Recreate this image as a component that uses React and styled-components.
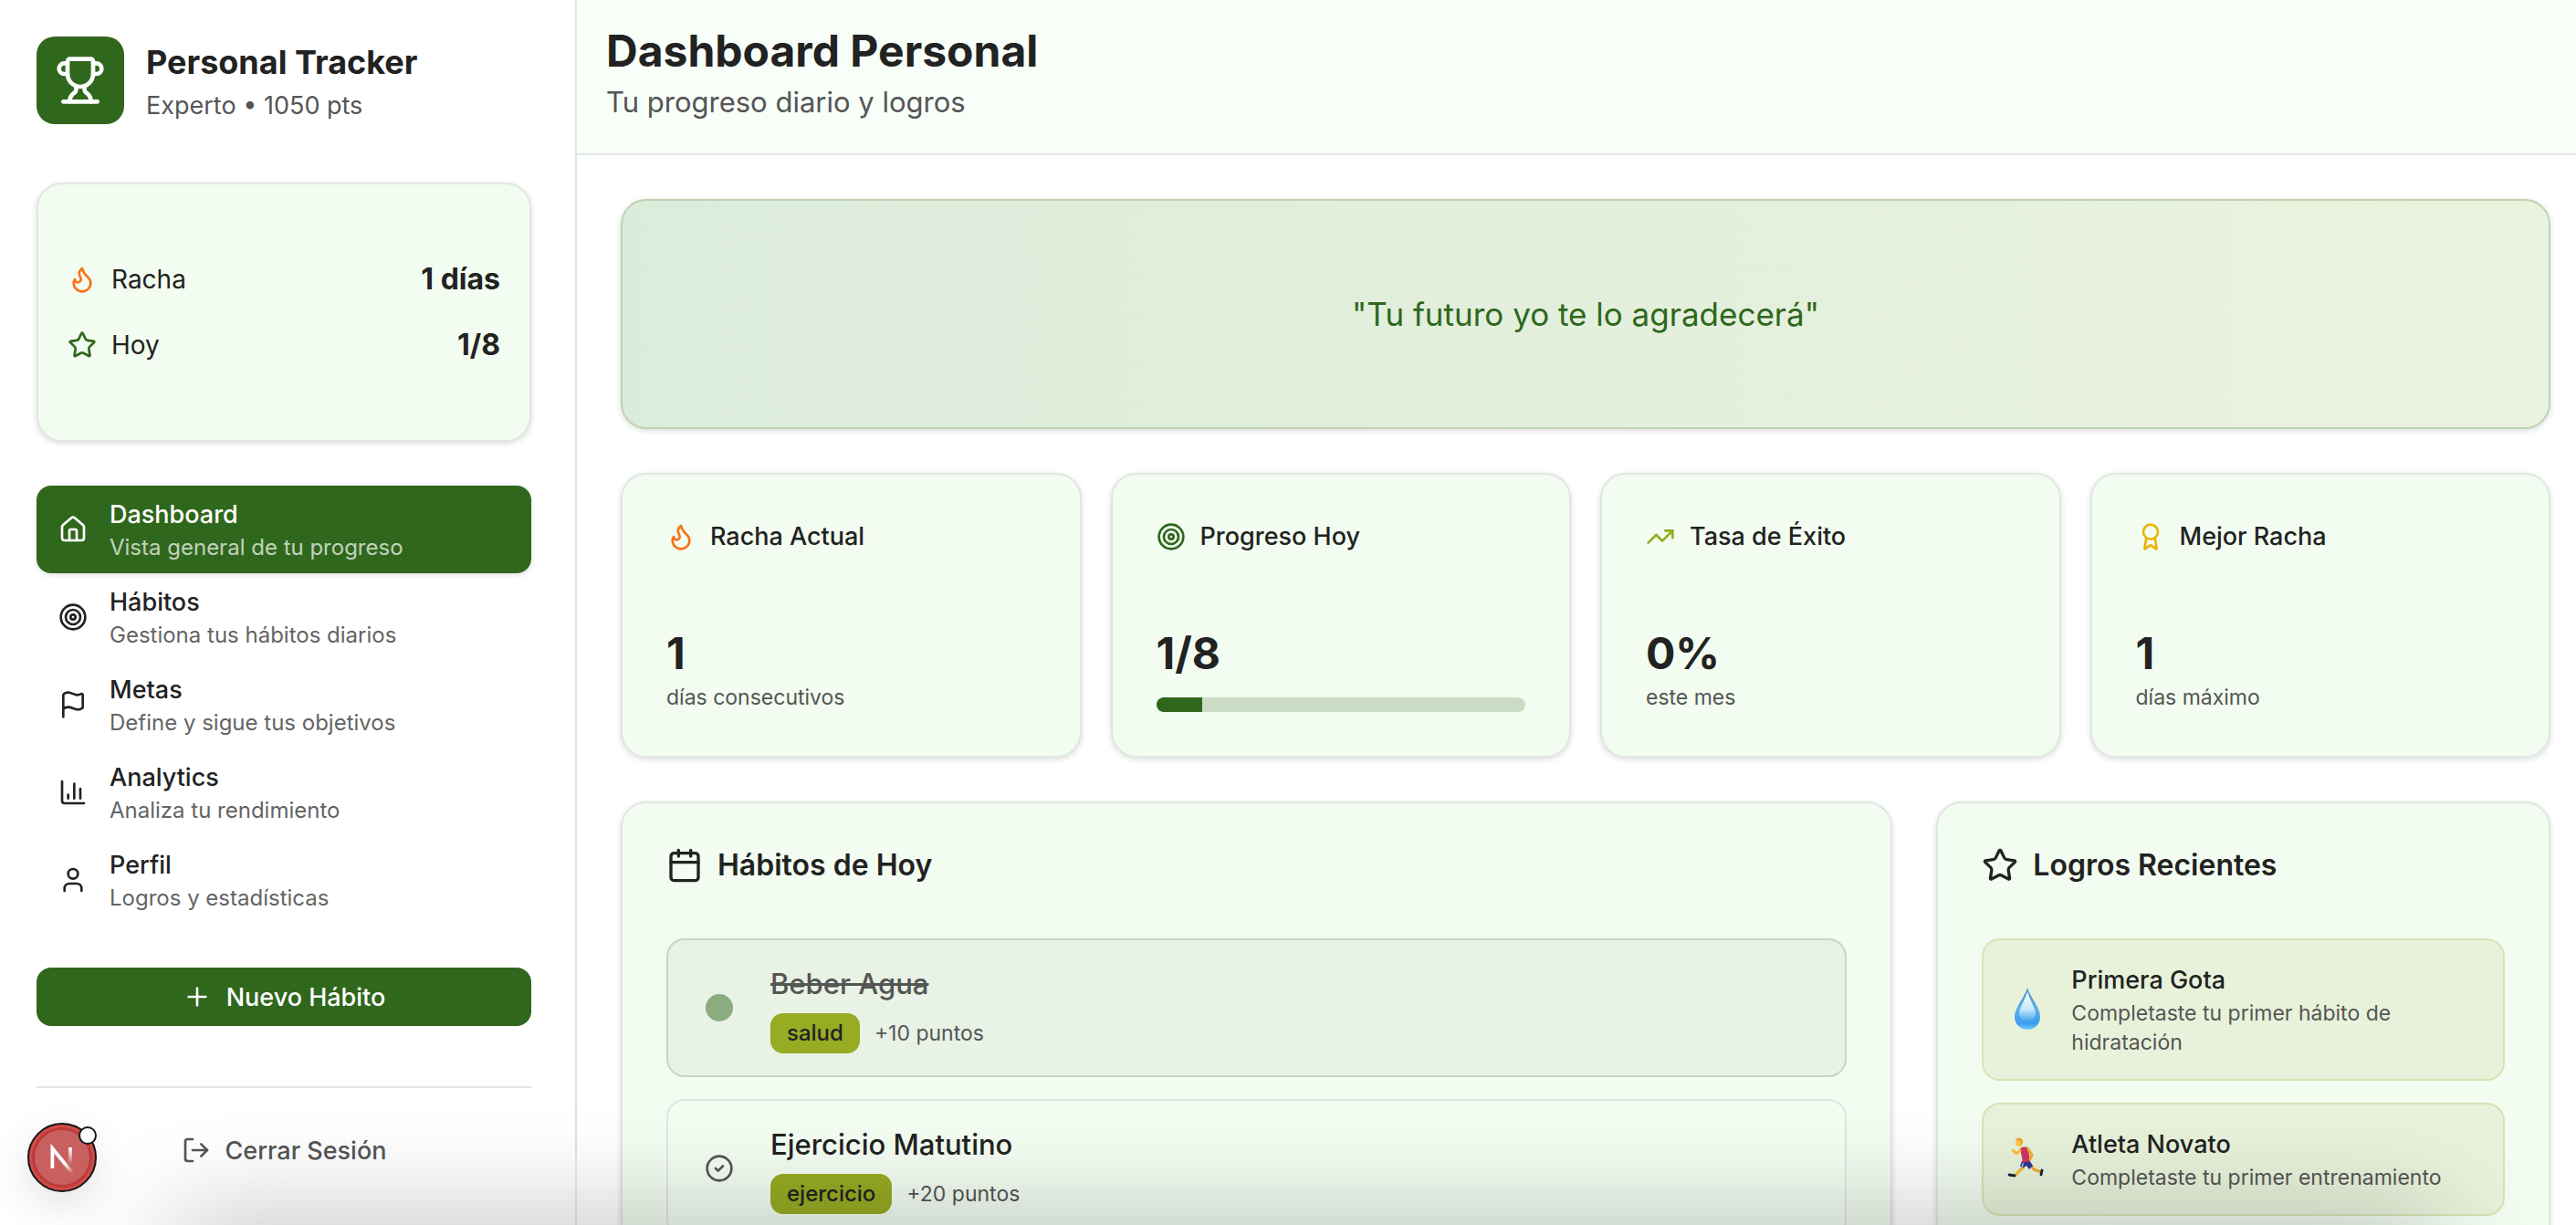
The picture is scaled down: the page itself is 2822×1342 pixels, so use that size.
import React from "react";
import styled, { createGlobalStyle } from "styled-components";
import {
  Award,
  Calendar,
  ChartColumn,
  CircleCheck,
  Flag,
  Flame,
  House,
  LogOut,
  Plus,
  Star,
  Target,
  TrendingUp,
  Trophy,
  User,
} from "lucide-react";

const color = {
  ink: "#222222",
  muted: "#555555",
  green: "#2f671c",
  lime: "#97ab23",
  orange: "#f97316",
  gold: "#eab308",
  card: "#f2fcf0",
  line: "#dfe8de",
};

const GlobalStyle = createGlobalStyle`
  *, *::before, *::after { box-sizing: border-box; }
  html, body { margin: 0; height: 100%; overflow: hidden; }
  body {
    background: #ffffff;
    color: ${color.ink};
    font-family: Inter, "Liberation Sans", sans-serif;
    -webkit-font-smoothing: antialiased;
  }
  h1, h2, h3, p, ul, blockquote { margin: 0; padding: 0; }
  ul { list-style: none; }
  button { font: inherit; border: 0; cursor: pointer; }
  svg { display: block; flex: none; }
`;

const Shell = styled.div`
  display: flex;
  height: 100vh;
  overflow: hidden;
`;

const Sidebar = styled.aside`
  flex: none;
  width: 632px;
  padding: 40px 48px 32px 40px;
  border-right: 2px solid ${color.line};
`;

const Brand = styled.div`
  display: flex;
  align-items: center;
  gap: 24px;
  margin-bottom: 64px;
`;

const BrandMark = styled.div`
  display: grid;
  place-items: center;
  width: 96px;
  height: 96px;
  border-radius: 20px;
  background: ${color.green};
  color: #ffffff;
`;

const BrandName = styled.h2`
  font-size: 36px;
  line-height: 56px;
  font-weight: 700;
`;

const BrandMeta = styled.p`
  font-size: 27px;
  line-height: 40px;
  color: ${color.muted};
`;

const Card = styled.section`
  border: 2px solid ${color.line};
  border-radius: 28px;
  background: ${color.card};
  box-shadow: 0 2px 6px rgba(0, 0, 0, 0.14);
`;

const SummaryCard = styled(Card)`
  display: grid;
  gap: 16px;
  padding: 76px 32px;
  margin-bottom: 48px;
`;

const SummaryRow = styled.div`
  display: flex;
  align-items: center;
  justify-content: space-between;
  line-height: 56px;
`;

const IconLabel = styled.span`
  display: flex;
  align-items: center;
  gap: 16px;
  font-size: ${(p) => (p.$strong ? "27px" : "28px")};
  font-weight: ${(p) => (p.$strong ? 500 : 400)};
`;

const SummaryValue = styled.strong`
  font-size: 32px;
  font-weight: 700;
`;

const NavLink = styled.a`
  display: flex;
  align-items: center;
  gap: 24px;
  padding: 12px 24px;
  border-radius: 16px;
  text-decoration: none;
  color: ${(p) => (p.$active ? "#ffffff" : color.ink)};
  background: ${(p) => (p.$active ? color.green : "transparent")};
  box-shadow: ${(p) => (p.$active ? "0 2px 6px rgba(0, 0, 0, 0.12)" : "none")};
`;

const ItemTitle = styled.span`
  display: block;
  font-size: 27px;
  line-height: 40px;
  font-weight: 500;
`;

const NavText = styled.span`
  display: block;
  font-size: 24px;
  line-height: 32px;
  opacity: 0.7;
`;

const Caption = styled.p`
  font-size: 23px;
  line-height: 32px;
  color: ${color.muted};
`;

const ActionButton = styled.button`
  display: flex;
  align-items: center;
  justify-content: center;
  gap: 16px;
  width: 100%;
  height: 64px;
  border-radius: 16px;
  font-size: 27px;
  font-weight: 500;
  color: ${(p) => (p.$primary ? "#ffffff" : color.muted)};
  background: ${(p) => (p.$primary ? color.green : "transparent")};
  margin-top: ${(p) => (p.$primary ? "48px" : "0")};
`;

const SidebarFooter = styled.div`
  margin-top: 66px;
  padding-top: 36px;
  border-top: 2px solid ${color.line};
`;

const Content = styled.div`
  flex: 1;
  min-width: 0;
`;

const PageHeader = styled.header`
  padding: 24px 32px 32px;
  background: #f8fef8;
  border-bottom: 2px solid ${color.line};
`;

const PageTitle = styled.h1`
  font-size: 48px;
  line-height: 64px;
  font-weight: 700;
`;

const PageSubtitle = styled.p`
  font-size: 31px;
  line-height: 48px;
  color: ${color.muted};
`;

const Main = styled.main`
  display: grid;
  gap: 48px;
  padding: 48px 28px 48px 48px;
`;

const QuoteCard = styled(Card).attrs({ as: "blockquote" })`
  padding: 96px 48px;
  border-color: #bdd3b5;
  background: linear-gradient(90deg, #dcecdb, #eaf3dd);
  text-align: center;
  font-size: 35px;
  line-height: 56px;
  color: ${color.green};
`;

const StatGrid = styled.div`
  display: grid;
  grid-template-columns: repeat(4, minmax(0, 1fr));
  gap: 32px;
`;

const StatCard = styled(Card)`
  padding: 48px;
  line-height: 40px;
`;

const StatValue = styled.p`
  margin-top: 76px;
  font-size: 48px;
  line-height: 64px;
  font-weight: 700;
`;

const Track = styled.div`
  height: 16px;
  margin-top: 16px;
  border-radius: 8px;
  background: #cbdcc5;
  overflow: hidden;
`;

const Fill = styled.div`
  height: 100%;
  background: ${color.green};
`;

const PanelGrid = styled.div`
  display: grid;
  grid-template-columns: repeat(3, minmax(0, 1fr));
  gap: 48px;
`;

const Panel = styled(Card)`
  grid-column: span ${(p) => p.$span};
  padding: 48px;
`;

const PanelTitle = styled.h2`
  display: flex;
  align-items: center;
  gap: 16px;
  margin-bottom: 60px;
  font-size: 32px;
  line-height: 40px;
  font-weight: 600;
`;

const List = styled.ul`
  display: grid;
  gap: 24px;
`;

const HabitItem = styled.li`
  display: flex;
  align-items: center;
  gap: 24px;
  padding: 24px;
  border: 2px solid ${(p) => (p.$done ? "#c4d9bd" : color.line)};
  border-radius: 20px;
  background: ${(p) => (p.$done ? "#e8f2e5" : "#f3fdf2")};
`;

const CheckButton = styled.button`
  display: grid;
  place-items: center;
  width: 64px;
  height: 64px;
  padding: 0;
  background: transparent;
  color: ${color.muted};
`;

const DoneDot = styled.span`
  width: 30px;
  height: 30px;
  border-radius: 50%;
  background: #8bac7f;
`;

const HabitName = styled.h3`
  font-size: 31px;
  line-height: 48px;
  font-weight: 500;
  color: ${(p) => (p.$done ? color.muted : color.ink)};
  text-decoration: ${(p) => (p.$done ? "line-through" : "none")};
`;

const HabitMeta = styled.div`
  display: flex;
  align-items: center;
  gap: 16px;
  margin-top: 8px;
`;

const Badge = styled.span`
  padding: 0 18px;
  border-radius: 14px;
  background: ${color.lime};
  font-size: 24px;
  line-height: 44px;
  font-weight: 500;
`;

const Achievement = styled.li`
  display: flex;
  align-items: center;
  gap: 24px;
  padding: 24px;
  border: 2px solid #d6e4b5;
  border-radius: 20px;
  background: #e8f2da;
`;

const DevBadge = styled.button`
  position: fixed;
  left: 30px;
  bottom: 36px;
  width: 76px;
  height: 76px;
  padding: 0;
  border: 2px solid #171717;
  border-radius: 50%;
  background: #c96060;
  box-shadow: inset 0 0 0 3px #d24b49, inset 0 0 0 6px #bd3b3a, 0 16px 48px rgba(0, 0, 0, 0.12);
`;

const DevDot = styled.span`
  position: absolute;
  top: 2px;
  right: -2px;
  width: 20px;
  height: 20px;
  border: 2px solid #171717;
  border-radius: 50%;
  background: #ffffff;
`;

const BottomShade = styled.div`
  position: fixed;
  left: 190px;
  right: 150px;
  top: 100%;
  height: 80px;
  pointer-events: none;
  box-shadow: 0 0 120px rgba(0, 0, 0, 0.3);
`;

function DevLogo() {
  return (
    <svg width="72" height="72" viewBox="0 0 36 36" fill="none" aria-hidden="true">
      <defs>
        <linearGradient id="slant" x1="20" y1="21" x2="24" y2="26.5" gradientUnits="userSpaceOnUse">
          <stop stopColor="#fff" />
          <stop offset="1" stopColor="#fff" stopOpacity="0" />
        </linearGradient>
        <linearGradient id="stem" x1="22" y1="13" x2="22" y2="22" gradientUnits="userSpaceOnUse">
          <stop stopColor="#fff" />
          <stop offset="1" stopColor="#fff" stopOpacity="0" />
        </linearGradient>
      </defs>
      <path d="M23.8 26.6 12.7 13V24" stroke="url(#slant)" strokeWidth="1.9" />
      <path d="M22.500 12.500V23.500" stroke="url(#stem)" strokeWidth="1.9" />
    </svg>
  );
}

function DropIcon() {
  return (
    <svg width="48" height="48" viewBox="0 0 48 48" aria-hidden="true">
      <defs>
        <linearGradient id="water" x1="0" y1="0" x2="0" y2="1">
          <stop stopColor="#4a90c8" />
          <stop offset="0.5" stopColor="#5fb0ea" />
          <stop offset="0.85" stopColor="#3c9df0" />
          <stop offset="1" stopColor="#6fd0fb" />
        </linearGradient>
        <linearGradient id="shine" x1="0" y1="0" x2="0" y2="1">
          <stop stopColor="#f3fcff" />
          <stop offset="0.6" stopColor="#c8eafc" />
          <stop offset="1" stopColor="#8fcff8" stopOpacity="0.1" />
        </linearGradient>
      </defs>
      <path d="M24 0C22 9 10 21 10 32a14 14 0 0 0 28 0C38 21 26 9 24 0Z" fill="url(#water)" />
      <path d="M24 4C22 12 16 21 15 28a9 9 0 0 0 18 0C32 21 26 12 24 4Z" fill="url(#shine)" />
    </svg>
  );
}

function RunnerIcon() {
  return (
    <svg width="48" height="48" viewBox="0 0 48 48" fill="none" strokeLinecap="round" strokeLinejoin="round" aria-hidden="true">
      <path d="m20 32-4 4-5 5" stroke="#fbbc30" strokeWidth="3.2" />
      <path d="m28 31 3 4 8 3" stroke="#efa62c" strokeWidth="3" />
      <path d="m4 41 6 1" stroke="#1b2138" strokeWidth="2.8" />
      <path d="m40 36-1 5" stroke="#1b2138" strokeWidth="2.8" />
      <path d="m18 26 8-1 4 6-4 4-3-4-5 3-2-3Z" fill="#2d378f" />
      <path d="m19 29-1 4" stroke="#b8c4e8" strokeWidth="1.500" />
      <path d="M16 12c3-2 7-2 9 0l2 14-8 2-1-6-2-10Z" fill="#cf3763" />
      <path d="m25 13 4 6-2 5" stroke="#f3ae2f" strokeWidth="3" />
      <path d="m16 14-4 4-4-4" stroke="#fbbc30" strokeWidth="2.8" />
      <circle cx="15" cy="6" r="4" fill="#fdc84a" />
      <path d="M11 3c2-4 9-3 8 3l-2 2-1-4-5-1Z" fill="#eaa52e" />
    </svg>
  );
}

const nav = [
  { icon: House, title: "Dashboard", text: "Vista general de tu progreso", active: true },
  { icon: Target, title: "Hábitos", text: "Gestiona tus hábitos diarios" },
  { icon: Flag, title: "Metas", text: "Define y sigue tus objetivos" },
  { icon: ChartColumn, title: "Analytics", text: "Analiza tu rendimiento" },
  { icon: User, title: "Perfil", text: "Logros y estadísticas" },
];

const stats = [
  { icon: Flame, tint: color.orange, title: "Racha Actual", value: "1", text: "días consecutivos" },
  { icon: Target, tint: color.green, title: "Progreso Hoy", value: "1/8", progress: 1 / 8 },
  { icon: TrendingUp, tint: color.lime, title: "Tasa de Éxito", value: "0%", text: "este mes" },
  { icon: Award, tint: color.gold, title: "Mejor Racha", value: "1", text: "días máximo" },
];

const habits = [
  { name: "Beber Agua", tag: "salud", points: 10, done: true },
  { name: "Ejercicio Matutino", tag: "ejercicio", points: 20 },
];

const achievements = [
  { icon: DropIcon, title: "Primera Gota", text: "Completaste tu primer hábito de hidratación" },
  { icon: RunnerIcon, title: "Atleta Novato", text: "Completaste tu primer entrenamiento" },
];

export default function App() {
  return (
    <Shell>
      <GlobalStyle />
      <Sidebar>
        <Brand>
          <BrandMark>
            <Trophy size={56} />
          </BrandMark>
          <div>
            <BrandName>Personal Tracker</BrandName>
            <BrandMeta>Experto • 1050 pts</BrandMeta>
          </div>
        </Brand>

        <SummaryCard>
          <SummaryRow>
            <IconLabel>
              <Flame size={32} color={color.orange} />
              Racha
            </IconLabel>
            <SummaryValue>1 días</SummaryValue>
          </SummaryRow>
          <SummaryRow>
            <IconLabel>
              <Star size={32} color={color.green} />
              Hoy
            </IconLabel>
            <SummaryValue>1/8</SummaryValue>
          </SummaryRow>
        </SummaryCard>

        <nav>
          {nav.map(({ icon: Icon, title, text, active }) => (
            <NavLink key={title} href="#" $active={active}>
              <Icon size={32} />
              <span>
                <ItemTitle>{title}</ItemTitle>
                <NavText>{text}</NavText>
              </span>
            </NavLink>
          ))}
        </nav>

        <ActionButton $primary>
          <Plus size={32} />
          Nuevo Hábito
        </ActionButton>

        <SidebarFooter>
          <ActionButton>
            <LogOut size={32} />
            Cerrar Sesión
          </ActionButton>
        </SidebarFooter>
      </Sidebar>

      <Content>
        <PageHeader>
          <PageTitle>Dashboard Personal</PageTitle>
          <PageSubtitle>Tu progreso diario y logros</PageSubtitle>
        </PageHeader>
        <Main>
          <QuoteCard>"Tu futuro yo te lo agradecerá"</QuoteCard>

          <StatGrid>
            {stats.map(({ icon: Icon, tint, title, value, text, progress }) => (
              <StatCard key={title}>
                <IconLabel $strong>
                  <Icon size={32} color={tint} />
                  {title}
                </IconLabel>
                <StatValue>{value}</StatValue>
                {progress ? (
                  <Track role="progressbar" aria-label={title} aria-valuenow={progress * 100}>
                    <Fill style={{ width: `${progress * 100}%` }} />
                  </Track>
                ) : (
                  <Caption>{text}</Caption>
                )}
              </StatCard>
            ))}
          </StatGrid>

          <PanelGrid>
            <Panel $span={2}>
              <PanelTitle>
                <Calendar size={40} />
                Hábitos de Hoy
              </PanelTitle>
              <List>
                {habits.map(({ name, tag, points, done }) => (
                  <HabitItem key={name} $done={done}>
                    <CheckButton aria-label={name}>
                      {done ? <DoneDot /> : <CircleCheck size={32} />}
                    </CheckButton>
                    <div>
                      <HabitName $done={done}>{name}</HabitName>
                      <HabitMeta>
                        <Badge>{tag}</Badge>
                        <Caption>+{points} puntos</Caption>
                      </HabitMeta>
                    </div>
                  </HabitItem>
                ))}
              </List>
            </Panel>

            <Panel $span={1}>
              <PanelTitle>
                <Star size={40} />
                Logros Recientes
              </PanelTitle>
              <List>
                {achievements.map(({ icon: Icon, title, text }) => (
                  <Achievement key={title}>
                    <Icon />
                    <div>
                      <ItemTitle>{title}</ItemTitle>
                      <Caption>{text}</Caption>
                    </div>
                  </Achievement>
                ))}
              </List>
            </Panel>
          </PanelGrid>
        </Main>
      </Content>

      <BottomShade />
      <DevBadge aria-label="Next.js">
        <DevLogo />
        <DevDot />
      </DevBadge>
    </Shell>
  );
}
